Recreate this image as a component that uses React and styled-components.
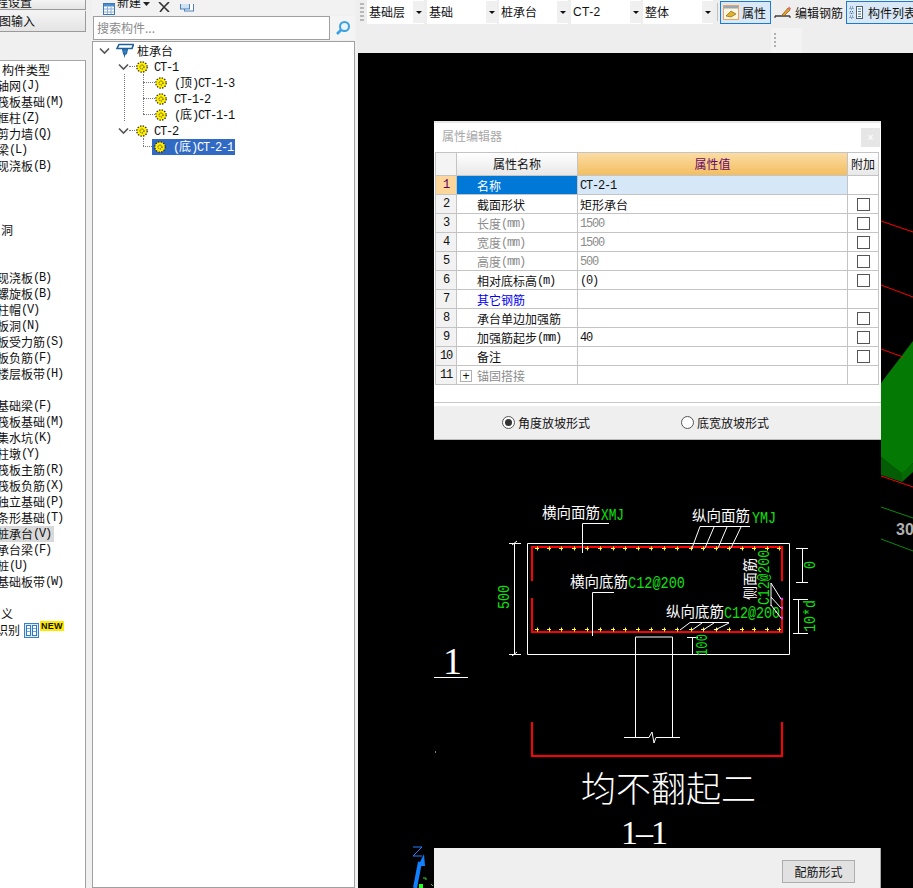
import React from 'react';
import styled, { createGlobalStyle } from 'styled-components';

const Global = createGlobalStyle`
  html, body { margin: 0; padding: 0; background: #f0f0f0; overflow: hidden; }
  #root { width: 913px; height: 888px; overflow: hidden; }
  * { box-sizing: border-box; }
`;

const CJK = '"Noto Sans CJK SC", "Liberation Sans", sans-serif';

const Page = styled.div`
  display: flex; width: 913px; height: 888px; background: #f0f0f0;
  font: 12px/16px ${CJK}; color: #111; overflow: hidden;
`;
const Ascii = styled.span`
  font-family: "Liberation Mono", monospace; font-size: 12px; letter-spacing: -1.2px;
`;
const mix = (text) => text.split(/([\x20-\x7e]+)/).filter(Boolean).map((run, i) =>
  /^[\x20-\x7e]+$/.test(run) ? <Ascii key={i}>{run}</Ascii> : <span key={i}>{run}</span>);

/* ---------- left module list ---------- */
const LeftColumn = styled.aside`
  width: 86px; flex: none; display: flex; flex-direction: column; overflow: hidden;
`;
const NavButton = styled.div`
  height: ${p => p.$h}px; flex: none; display: flex; align-items: ${p => p.$clip ? 'flex-end' : 'center'};
  background: linear-gradient(#f4f4f4, #e4e4e4); border-right: 1px solid #9a9a9a;
  border-bottom: 1px solid #9a9a9a; margin-bottom: 1px; white-space: nowrap; overflow: hidden;
  font-size: 12px;
`;
const NavLabel = styled.span`
  margin-left: ${p => p.$x}px; flex: none; margin-bottom: ${p => p.$lift ?? 0}px;
`;
const NavGap = styled.div`height: 27px; flex: none; background: #f0f0f0;`;
const ModuleList = styled.div`
  flex: 1; background: #fff; border-top: 1px solid #a8a8a8; border-right: 1px solid #a0a0a0;
  padding-top: 1px; overflow: hidden;
`;
const ModuleRow = styled.div`
  height: 16px; line-height: 16px; white-space: nowrap; display: flex; align-items: center;
  margin-left: ${p => p.$x ?? -3}px; width: ${p => p.$sel ? 57 : 120}px;
  background: ${p => p.$sel ? '#d9d9d9' : 'transparent'};
`;
const Splitter = styled.div`width: 6px; flex: none; background: #f0f0f0;`;
const NewBadge = styled.span`
  font: bold 9px/10px "Liberation Sans", sans-serif; color: #111; background: #ffe800;
  margin: -8px 0 0 1px; padding: 0 1px; height: 10px; letter-spacing: .2px;
`;

const modules = [
  ['构件类型', 2], ['轴网(J)'], ['筏板基础(M)'], ['框柱(Z)'], ['剪力墙(Q)'], ['梁(L)'], ['现浇板(B)'],
  [''], [''], [''], ['洞', 1], [''], [''],
  ['现浇板(B)'], ['螺旋板(B)'], ['柱帽(V)'], ['板洞(N)'], ['板受力筋(S)'], ['板负筋(F)'], ['楼层板带(H)'], [''],
  ['基础梁(F)'], ['筏板基础(M)'], ['集水坑(K)'], ['柱墩(Y)'], ['筏板主筋(R)'], ['筏板负筋(X)'], ['独立基础(P)'], ['条形基础(T)'],
  ['桩承台(V)', -3, true], ['承台梁(F)'], ['桩(U)'], ['基础板带(W)'], [''], ['义', 1],
];

const GridIcon = () => (
  <svg width="15" height="15" viewBox="0 0 15 15" style={{ marginLeft: 4, flex: 'none' }}>
    <rect x=".5" y=".5" width="14" height="14" fill="#dcecfa" stroke="#3a7fc0" />
    <rect x="2.500" y="2.500" width="4" height="10" fill="#fff" stroke="#2f78c4" />
    <rect x="8.500" y="2.500" width="4" height="10" fill="#fff" stroke="#2f78c4" />
    <path d="M3 5.500h3M3 8.500h3M9 5.500h3M9 8.500h3" stroke="#6aa6e0" />
  </svg>
);

/* ---------- tree panel ---------- */
const TreeColumn = styled.section`
  width: 263px; flex: none; display: flex; flex-direction: column;
`;
const TreeToolbar = styled.div`
  height: 15px; flex: none; display: flex; align-items: flex-end; overflow: hidden;
  padding-left: 10px; background: #f2f2f2; gap: 2px;
`;
const ToolLabel = styled.span`flex: none; line-height: 16px; margin-bottom: 5px;`;
const SearchRow = styled.div`
  height: 25px; flex: none; display: flex; padding-top: 1px; background: #f0f0f0;
`;
const SearchBox = styled.div`
  width: 237px; height: 24px; margin-left: 1px; background: #fff; border: 1px solid #a0a0a0;
  color: #8a8a8a; padding: 3px 0 0 3px; font-size: 12px; line-height: 16px;
`;
const SearchButton = styled.div`
  flex: 1; display: flex; align-items: center; justify-content: center; background: #f4f4f4;
`;
const TreeBox = styled.div`
  flex: 1; margin-top: 1px; background: #fff; border: 1px solid #a0a0a0; padding-top: 1px;
  position: relative; overflow: hidden;
`;
const TreeRow = styled.div`
  height: 16px; display: flex; align-items: center; padding-left: ${p => p.$indent}px; white-space: nowrap;
`;
const TreeText = styled.span`
  margin-left: ${p => p.$gap ?? 5}px; line-height: 16px;
`;
const SelectedNode = styled.div`
  display: flex; align-items: center; height: 16px; background: #316ac5; color: #fff; padding: 0 2px 0 2px;
`;
const Dotted = styled.i`
  position: absolute; display: block; left: ${p => p.$x}px; top: ${p => p.$y}px;
  width: ${p => p.$w ?? 1}px; height: ${p => p.$h ?? 1}px;
  ${p => p.$h ? 'border-left: 1px dotted #777;' : 'border-top: 1px dotted #777;'}
`;

const Chevron = () => (
  <svg width="11" height="8" viewBox="0 0 11 8" style={{ flex: 'none' }}>
    <path d="M1 1.500l4.500 4.500L10 1.500" fill="none" stroke="#555" strokeWidth="1.600" />
  </svg>
);
const Gear = () => (
  <svg width="12" height="12" viewBox="0 0 12 12" style={{ flex: 'none' }}>
    <circle cx="6" cy="6" r="5.200" fill="#ffee00" />
    <circle cx="6" cy="6" r="5.200" fill="none" stroke="#222" strokeWidth="1.200" strokeDasharray="1.400 1.330" />
    <circle cx="6" cy="6" r="2" fill="#ffee00" stroke="#222" strokeWidth="1" strokeDasharray="1 1" />
  </svg>
);
const CapIcon = () => (
  <svg width="18" height="16" viewBox="0 0 18 16" style={{ flex: 'none', marginLeft: 6 }}>
    <path d="M3 1.500h14.500l-1.500 4H1z" fill="#fff" stroke="#1f5f9f" strokeWidth="1.600" />
    <path d="M6.500 6h5l-1 5h-3z" fill="#2f7fc0" stroke="#1f5f9f" />
    <path d="M7.500 11h2l-1 4z" fill="#1f5f9f" />
  </svg>
);

/* ---------- main ---------- */
const Main = styled.main`
  flex: 1; min-width: 0; padding-left: 2px; display: flex; flex-direction: column;
`;
const TopBar = styled.div`
  height: 53px; flex: none; background: #eeeeee; display: flex; flex-direction: column; overflow: hidden;
`;
const BarRow = styled.div`
  height: 25px; display: flex; align-items: flex-start; white-space: nowrap;
`;
const Grip = styled.div`
  width: 4px; margin: 3px 3px 0 3px; height: 18px; flex: none;
  background: repeating-linear-gradient(#b8b8b8 0 2px, transparent 2px 4px);
`;
const Combo = styled.div`
  width: ${p => p.$w}px; height: 24px; flex: none; background: #fff; margin-right: ${p => p.$mr ?? 2}px;
  display: flex; align-items: center; padding-left: 2px; justify-content: space-between; color: #111;
`;
const ComboArrow = styled.div`
  width: 11px; height: 22px; background: #f0f0f0; display: flex; align-items: center; justify-content: center;
  &::after { content: ""; border: 3px solid transparent; border-top: 3px solid #111; margin-top: 3px; }
`;
const ComboLatin = styled.span`font: 12px "Liberation Sans", sans-serif; letter-spacing: .4px;`;
const Separator = styled.div`width: 1px; height: 18px; background: #c0c0c0; margin: 3px 2px 0 4px; flex: none;`;
const ToolButton = styled.div`
  height: 23px; margin-top: 1px; margin-left: ${p => p.$ml ?? 0}px; flex: none; display: flex; align-items: center;
  gap: ${p => p.$gap ?? 3}px; padding: 0 2px; width: ${p => p.$w}px; overflow: hidden;
  background: ${p => p.$on ? '#d8e8f6' : 'transparent'};
  border: 1px solid ${p => p.$on ? '#1a7bd0' : 'transparent'};
`;
const SubBar = styled.div`
  width: 31px; height: 25px; margin: 3px 0 0 414px; background: #f3f3f3; border-radius: 2px 2px 0 0;
  padding: 5px 0 0 3px;
`;
const SubGrip = styled.div`
  width: 2px; height: 16px; background: repeating-linear-gradient(#b0b0b0 0 2px, transparent 2px 4px);
`;

const Canvas = styled.div`
  flex: 1; margin-left: 1px; background: #000; position: relative; overflow: hidden;
`;
const Cad = styled.svg`display: block; width: 555px; height: 835px;`;
const White = styled.text`fill: #fff; font: ${p => p.$s ?? 14.5}px ${CJK};`;
const Serif = styled.text`fill: #fff; font: ${p => p.$s ?? 36}px "Liberation Serif", serif;`;
const GreenText = styled.text`fill: #10e010; font: ${p => p.$s ?? 16}px "Liberation Mono", monospace;`;
const Green = ({ len, ...rest }) => <GreenText textLength={len} lengthAdjust="spacingAndGlyphs" {...rest} />;
const Ref = styled.path`fill: none; stroke: #ff0000; stroke-width: 2;`;
const Line = styled.path`fill: none; stroke: #fff; stroke-width: 1;`;

/* ---------- property dialog ---------- */
const Dialog = styled.div`
  position: absolute; left: 76px; top: 68px; width: 447px; height: 319px; background: #fff;
  display: flex; flex-direction: column; border-top: 2px solid #e8e8e8;
`;
const DialogTitle = styled.div`
  height: 29px; flex: none; display: flex; justify-content: space-between; padding: 5px 1px 0 8px;
  color: #a8a8a8; font-size: 12px; line-height: 16px;
`;
const CloseBox = styled.div`
  width: 19px; height: 19px; background: #e6e6e6; color: #fbfbfb; text-align: center;
  font: bold 10px/19px "Liberation Sans", sans-serif;
`;
const Grid = styled.div`
  margin: 0 2px 0 1px; display: grid; grid-template-columns: 21px 121px 270px 31px;
  border-top: 1px solid #c4c4c4; border-left: 1px solid #c4c4c4;
`;
const Cell = styled.div`
  height: ${p => p.$h ?? 19}px; border-right: 1px solid #c4c4c4; border-bottom: 1px solid #c4c4c4;
  display: flex; align-items: center; white-space: nowrap; overflow: hidden;
  padding-left: ${p => p.$pad ?? 0}px; padding-top: ${p => p.$pt ?? 0}px;
  justify-content: ${p => p.$center ? 'center' : 'flex-start'};
  color: ${p => p.$color ?? '#111'};
  background: ${p => p.$bg ?? '#fff'};
`;
const Check = styled.div`width: 13px; height: 13px; border: 1px solid #555; background: #fff;`;
const Plus = styled.div`
  width: 12px; height: 12px; border: 1px solid #b0b0b0; margin-right: 5px; flex: none;
  margin-left: -17px; font: 12px/10px "Liberation Sans", sans-serif; color: #111; text-align: center;
`;
const DialogSpacer = styled.div`height: 18px; flex: none; border-bottom: 1px solid #c8c8c8;`;
const RadioBand = styled.div`
  flex: 1; margin-top: 3px; background: #efefef; border-bottom: 1px solid #bbb; display: flex; align-items: center;
`;
const RadioItem = styled.div`display: flex; align-items: center; margin-left: ${p => p.$ml}px; gap: 3px;`;
const RadioDot = styled.div`
  width: 13px; height: 13px; border-radius: 50%; border: 1px solid #555; background: #fff;
  display: flex; align-items: center; justify-content: center;
  &::after { content: ""; width: 7px; height: 7px; border-radius: 50%; background: ${p => p.$on ? '#333' : 'transparent'}; }
`;
const BottomPanel = styled.div`
  position: absolute; left: 76px; bottom: 0; width: 447px; height: 40px; background: #efefef;
  border-right: 1px solid #aaa; padding: 12px 0 0 348px;
`;
const FormButton = styled.div`
  width: 73px; height: 23px; background: #e1e1e1; border: 1px solid #adadad; text-align: center; line-height: 21px;
`;

const rows = [
  ['1', '名称', 'CT-2-1', false],
  ['2', '截面形状', '矩形承台', true],
  ['3', '长度(mm)', '1500', true, 'g'],
  ['4', '宽度(mm)', '1500', true, 'g'],
  ['5', '高度(mm)', '500', true, 'g'],
  ['6', '相对底标高(m)', '(0)', true],
  ['7', '其它钢筋', '', false, 'b'],
  ['8', '承台单边加强筋', '', true],
  ['9', '加强筋起步(mm)', '40', true],
  ['10', '备注', '', true],
  ['11', '锚固搭接', '', false, 'g'],
];

const dotsX = [537, 549, 561, 574, 587, 600, 613, 625, 638, 651, 664, 677, 691, 703, 716, 729, 742, 754, 767, 779];

const CadDrawing = () => (
  <Cad viewBox="358 53 555 835">
    {/* 3D model fragment on the right */}
    <polygon points="881,383 913,341 913,463 902,474 881,457" fill="#047a04" />
    <polygon points="881,457 902,473 902,482 881,475" fill="#045c04" />
    <polygon points="902,473 913,463 913,472 902,482" fill="#046a04" />
    <path d="M881 221L913 232M881 285L913 297M881 349L903 357M881 476L913 487" stroke="#f00" fill="none" />
    <path d="M881 507L913 518M881 539L913 551" stroke="#0a8a0a" fill="none" />
    <text x="896" y="535" fill="#b0b0b0" style={{ font: 'bold 16px "Liberation Sans", sans-serif' }}>30</text>

    {/* section */}
    <Line d="M527.500 543.500H789.500V654.500H527.500Z" />
    <Ref d="M532 581V547H782V581M532 598V632H782V598" />
    {dotsX.map(x => (
      <g key={x} stroke="#ffff30" strokeWidth="1">
        <path d={`M${x - 2} 548.500h4M${x}.500 546.500v4M${x - 2} 629.500h4M${x}.500 627.500v4`} />
      </g>
    ))}
    {/* left dim */}
    <Line d="M514.500 543V654M509 543.500H521M509 654.500H521M512 545l5 -4M512 656l5 -4" />
    <Green x="0" y="0" len={24} transform="translate(509 609) rotate(-90)">500</Green>
    {/* labels */}
    <White x="542" y="518">横向面筋</White>
    <Green x="601" y="520" len={23}>XMJ</Green>
    <Line d="M609 523.500H582.500V553" />
    <White x="692" y="521">纵向面筋</White>
    <Green x="752" y="523" len={24}>YMJ</Green>
    <Line d="M750 526.500H700L692 548M714 527L705 548M727 527L718 548M741 527L731 548" />
    <White x="570" y="587">横向底筋</White>
    <Green x="628" y="588" len={57}>C12@200</Green>
    <Line d="M614 592.500H592.500V636" />
    <White x="666" y="617">纵向底筋</White>
    <Green x="724" y="618" len={56}>C12@200</Green>
    <Line d="M729 622.500H690L680 630M702 623L692 630M714 623L703 630M729 623L715 630" />
    <White x="0" y="0" $s={14} transform="translate(755 600) rotate(-90)">侧面筋</White>
    <Green x="0" y="0" len={55} transform="translate(769 605) rotate(-90)">C12@200</Green>
    <Line d="M771 583L781 599M771 597L781 608M771 605L781 618M771 583V606" />
    <path d="M781 599h2M781 608h2M781 618h2" stroke="#ff30ff" strokeWidth="2.500" />
    {/* right dims */}
    <Line d="M802.500 548V582M796 548.500H808M796 582.500H808" />
    <Green x="0" y="0" len={8} transform="translate(815 569) rotate(-90)">0</Green>
    <Line d="M798.500 599V633M793 599.500H808M793 633.500H808" />
    <Green x="0" y="0" len={32} transform="translate(815 632) rotate(-90)">10*d</Green>
    {/* pedestal */}
    <Line d="M692.500 637V654M687 637.500H698M687 654.500H698" />
    <Green x="0" y="0" len={22} transform="translate(707 656) rotate(-90)">100</Green>
    <Line d="M635.500 637H672.500M635.500 637V737M672.500 637V737" />
    <Line d="M624 737.500H649L652 732L654 743L656 737.500H680" />
    <Ref d="M532 722V756H782V722" />
    {/* titles */}
    <Serif x="443" y="674" $s={38}>1</Serif>
    <path d="M434 677.500H468" stroke="#fff" />
    <path d="M435 752h1" stroke="#fff" />
    <text x="581" y="802" fill="#fff" style={{ font: `200 35px ${CJK}` }}>均不翻起二</text>
    <Serif x="621" y="844" $s={34} textLength={47} lengthAdjust="spacing">1–1</Serif>
    {/* axis */}
    <path d="M413 847h9l-9 9h9" stroke="#2080ff" fill="none" />
    <path d="M415 888L420 862" stroke="#1080ff" strokeWidth="4" />
    <polygon points="418,866 425,866 424,854" fill="#1080ff" />
    <rect x="419" y="884" width="4" height="4" fill="#20ff20" />
    <path d="M423 878h3v2M431 884l2 2" stroke="#20e020" fill="none" />
  </Cad>
);

export default function App() {
  return (
    <Page>
      <Global />
      <LeftColumn>
        <NavButton $h={10} $clip><NavLabel $x={-16} $lift={-1}>工程设置</NavLabel></NavButton>
        <NavButton $h={21}><NavLabel $x={-1}>图输入</NavLabel></NavButton>
        <NavGap />
        <ModuleList>
          {modules.map(([t, x, sel], i) => (
            <ModuleRow key={i} $x={x} $sel={sel}>{mix(t)}</ModuleRow>
          ))}
          <ModuleRow $x={-4}>
            {mix('识别')}<GridIcon /><NewBadge>NEW</NewBadge>
          </ModuleRow>
        </ModuleList>
      </LeftColumn>
      <Splitter />
      <TreeColumn>
        <TreeToolbar>
          <svg width="12" height="12" viewBox="0 0 12 12" style={{ flex: 'none', marginLeft: 1 }}>
            <rect x=".5" y=".5" width="11" height="11" fill="#fff" stroke="#3a78b8" />
            <rect x="1" y="1" width="10" height="2.500" fill="#4c8ed0" />
            <path d="M1 6h10M1 9h10M4.500 4v7M8 4v7" stroke="#88aed4" />
          </svg>
          <ToolLabel>新建</ToolLabel>
          <svg width="7" height="6" style={{ flex: 'none', marginBottom: 8 }}><path d="M0 1h7L3.500 5z" fill="#222" /></svg>
          <svg width="12" height="10" viewBox="0 0 12 10" style={{ flex: 'none', marginLeft: 6, marginBottom: 3 }}>
            <path d="M1 0l5 5M11 0L6 5 2 10M6 5l5 5" stroke="#333" strokeWidth="1.600" fill="none" />
          </svg>
          <svg width="14" height="8" viewBox="0 0 14 8" style={{ flex: 'none', marginLeft: 8, marginBottom: 3 }}>
            <rect x="4.500" y="-4" width="9" height="11" fill="#fff" stroke="#4a7fb8" />
            <rect x=".5" y="-2" width="9" height="7" fill="#cfe2f5" stroke="#4a7fb8" />
          </svg>
        </TreeToolbar>
        <SearchRow>
          <SearchBox>搜索构件...</SearchBox>
          <SearchButton>
            <svg width="16" height="16" viewBox="0 0 16 16">
              <circle cx="9.500" cy="6.500" r="4.500" fill="#e8f5fd" stroke="#3aa0e0" strokeWidth="2" />
              <path d="M6 10L2 14" stroke="#3aa0e0" strokeWidth="2.600" />
            </svg>
          </SearchButton>
        </SearchRow>
        <TreeBox>
          <Dotted $x={31} $y={32} $h={47} />
          <Dotted $x={50} $y={32} $h={40} />
          <Dotted $x={50} $y={40} $w={12} />
          <Dotted $x={50} $y={56} $w={12} />
          <Dotted $x={50} $y={72} $w={12} />
          <Dotted $x={50} $y={96} $h={8} />
          <Dotted $x={50} $y={104} $w={9} />
          <Dotted $x={36} $y={24} $w={8} />
          <Dotted $x={36} $y={88} $w={8} />
          <TreeRow $indent={6}><Chevron /><CapIcon /><TreeText $gap={3}>桩承台</TreeText></TreeRow>
          <TreeRow $indent={25}><Chevron /><span style={{ width: 7 }} /><Gear /><TreeText $gap={6}>{mix('CT-1')}</TreeText></TreeRow>
          <TreeRow $indent={62}><Gear /><TreeText $gap={7}>{mix('(顶)CT-1-3')}</TreeText></TreeRow>
          <TreeRow $indent={62}><Gear /><TreeText $gap={7}>{mix('CT-1-2')}</TreeText></TreeRow>
          <TreeRow $indent={62}><Gear /><TreeText $gap={7}>{mix('(底)CT-1-1')}</TreeText></TreeRow>
          <TreeRow $indent={25}><Chevron /><span style={{ width: 7 }} /><Gear /><TreeText $gap={6}>{mix('CT-2')}</TreeText></TreeRow>
          <TreeRow $indent={59}>
            <SelectedNode><Gear /><TreeText $gap={7}>{mix('(底)CT-2-1')}</TreeText></SelectedNode>
          </TreeRow>
        </TreeBox>
      </TreeColumn>
      <Main>
        <TopBar>
          <BarRow>
            <Grip />
            <Combo $w={57} $mr={3}><span>基础层</span><ComboArrow /></Combo>
            <Combo $w={70}><span>基础</span><ComboArrow /></Combo>
            <Combo $w={69} $mr={3}><span>桩承台</span><ComboArrow /></Combo>
            <Combo $w={70}><ComboLatin>CT-2</ComboLatin><ComboArrow /></Combo>
            <Combo $w={70} $mr={0}><span>整体</span><ComboArrow /></Combo>
            <Separator />
            <ToolButton $on $w={51}>
              <svg width="16" height="15" viewBox="0 0 16 15" style={{ flex: 'none' }}>
                <rect x=".5" y=".5" width="15" height="14" fill="#fdf6e0" stroke="#f0a060" />
                <rect x="1" y="1" width="14" height="2.500" fill="#9aa6b0" />
                <path d="M3 11l5 -5 5 3 -5 3z" fill="#e0b030" stroke="#8a6a10" strokeWidth=".7" />
              </svg>
              <span>属性</span>
            </ToolButton>
            <ToolButton $w={74} $gap={4}>
              <svg width="17" height="15" viewBox="0 0 17 15" style={{ flex: 'none' }}>
                <path d="M1 11h15" stroke="#222" strokeWidth="1.300" />
                <path d="M1 11v2M16 11v2" stroke="#222" />
                <path d="M8 10L14 3l2 2-6 6z" fill="#e8a030" stroke="#7a5010" strokeWidth=".7" />
                <path d="M14 3l1 -1.500 2 2-1 1.500z" fill="#e07070" />
              </svg>
              <span>编辑钢筋</span>
            </ToolButton>
            <ToolButton $on $w={80} $ml={1} $gap={4}>
              <svg width="15" height="15" viewBox="0 0 15 15" style={{ flex: 'none' }}>
                <path d="M1 2h3v2H1zM1 6.500h3v2H1zM1 11h3v2H1z" fill="none" stroke="#3a6a90" strokeDasharray="1 1" />
                <rect x="7.500" y="1.500" width="6" height="12" fill="#fff" stroke="#506070" />
                <path d="M9 4h3M9 6.500h3M9 9h3M9 11.500h3" stroke="#3a78b8" />
              </svg>
              <span>构件列表</span>
            </ToolButton>
          </BarRow>
          <SubBar><SubGrip /></SubBar>
        </TopBar>
        <Canvas>
          <CadDrawing />
          <Dialog>
            <DialogTitle>
              <span>属性编辑器</span>
              <CloseBox>×</CloseBox>
            </DialogTitle>
            <Grid>
              <Cell $h={23} $bg="#f4f4f4" />
              <Cell $h={23} $center $bg="linear-gradient(#ffffff,#e8e8e8)">属性名称</Cell>
              <Cell $h={23} $center $color="#6a0a6a" $bg="linear-gradient(#fbdca4,#f3be60)">属性值</Cell>
              <Cell $h={23} $center $bg="linear-gradient(#ffffff,#e8e8e8)">附加</Cell>
              {rows.map(([n, name, value, check, tone], i) => {
                const first = i === 0;
                const tc = tone === 'g' ? '#8c8c8c' : tone === 'b' ? '#0000f0' : first ? '#fff' : '#111';
                const vc = tone === 'g' ? '#8c8c8c' : '#111';
                return (
                  <React.Fragment key={n}>
                    <Cell $center $color={first ? '#5a005a' : '#111'} $bg={first ? '#fcd69a' : '#f2f2f2'}>{mix(n)}</Cell>
                    <Cell $pad={20} $pt={2} $color={tc} $bg={first ? '#0078d7' : '#fff'}>
                      {n === '11' && <Plus>+</Plus>}{mix(name)}
                    </Cell>
                    <Cell $pad={2} $pt={2} $color={vc} $bg={first ? '#d6e8f7' : '#fff'}>{mix(value)}</Cell>
                    <Cell $center>{check && <Check />}</Cell>
                  </React.Fragment>
                );
              })}
            </Grid>
            <DialogSpacer />
            <RadioBand>
              <RadioItem $ml={68}><RadioDot $on /><span>角度放坡形式</span></RadioItem>
              <RadioItem $ml={91}><RadioDot /><span>底宽放坡形式</span></RadioItem>
            </RadioBand>
          </Dialog>
          <BottomPanel><FormButton>配筋形式</FormButton></BottomPanel>
        </Canvas>
      </Main>
    </Page>
  );
}
